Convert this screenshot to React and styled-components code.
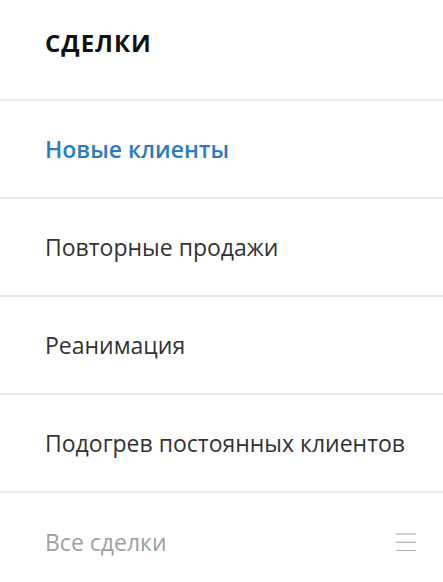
import React from "react";
import styled, { createGlobalStyle } from "styled-components";

const GlobalStyle = createGlobalStyle`
  body {
    margin: 0;
    background: #fff;
    font-family: "Open Sans", "Noto Sans", sans-serif;
  }
`;

const Panel = styled.nav`
  width: 443px;
  height: 582px;
  overflow: hidden;
  background: #fff;
`;

const Header = styled.div`
  height: 101px;
  display: flex;
  align-items: center;
  padding: 0 45px;
  padding-bottom: 14px;
  box-sizing: border-box;
  border-bottom: 2px solid #e9e9e9;
  font-size: 24px;
  font-weight: 700;
  letter-spacing: 1px;
  color: #111;
`;

const Item = styled.a`
  height: 98px;
  display: flex;
  align-items: center;
  justify-content: space-between;
  padding: 0 27px 0 45px;
  box-sizing: border-box;
  border-bottom: 2px solid #e9e9e9;
  font-size: 23px;
  text-decoration: none;
  color: ${(p) => (p.$active ? "#2c7cc0" : p.$muted ? "#a0a0a0" : "#333")};
  font-weight: ${(p) => (p.$active ? 600 : 400)};

  &:last-child {
    border-bottom: none;
  }
`;

const MenuIcon = () => (
  <svg width="20" height="18" viewBox="0 0 20 18">
    <g stroke="#b0b0b0" strokeWidth="1.2">
      <line x1="0" y1="1" x2="20" y2="1" />
      <line x1="0" y1="9.3" x2="20" y2="9.3" />
      <line x1="0" y1="17.6" x2="20" y2="17.6" />
    </g>
  </svg>
);

const items = [
  { label: "Новые клиенты", active: true },
  { label: "Повторные продажи" },
  { label: "Реанимация" },
  { label: "Подогрев постоянных клиентов" },
];

const App = () => (
  <>
    <GlobalStyle />
    <Panel>
      <Header>СДЕЛКИ</Header>
      {items.map((it) => (
        <Item key={it.label} $active={it.active}>
          {it.label}
        </Item>
      ))}
      <Item $muted>
        Все сделки
        <MenuIcon />
      </Item>
    </Panel>
  </>
);

export default App;
